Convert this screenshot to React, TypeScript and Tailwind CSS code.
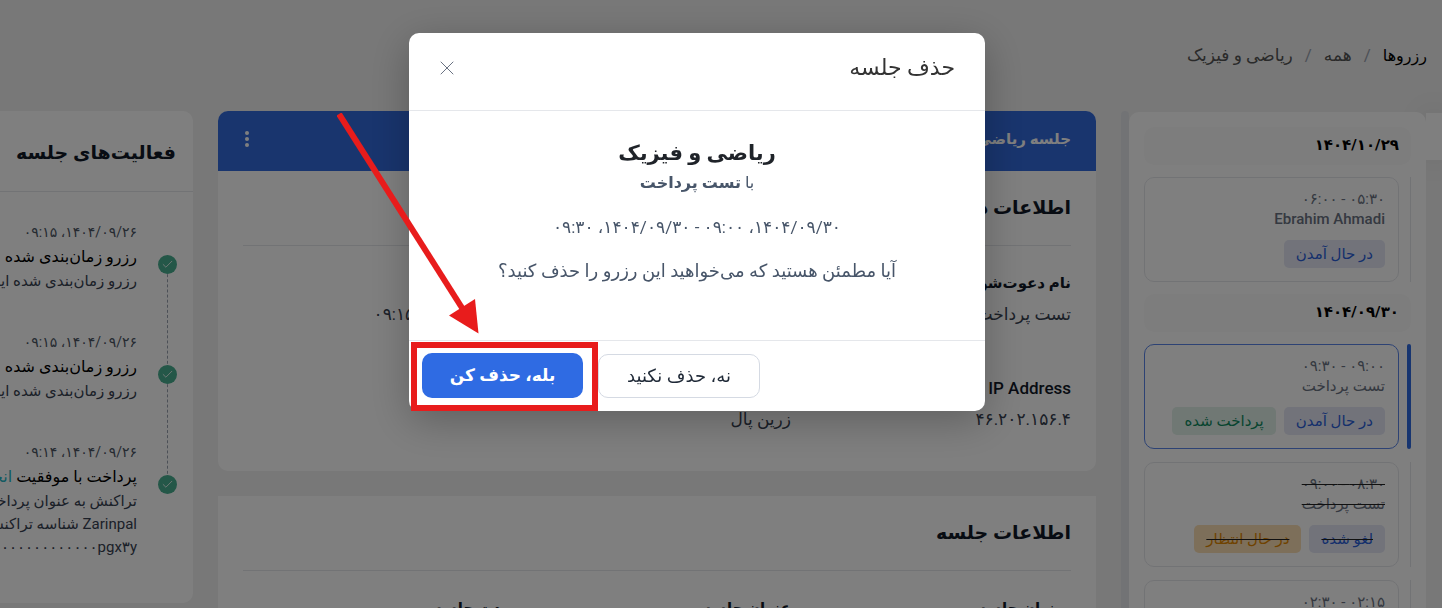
import { Check, X } from 'lucide-react';
import { clsx } from 'clsx';

type Badge = { text: string; tone: 'blue' | 'green' | 'orange' };
type Session = { time: string; name?: string; badges?: Badge[]; active?: boolean; canceled?: boolean };

const groups: { date: string; sessions: Session[] }[] = [
  {
    date: '۱۴۰۴/۱۰/۲۹',
    sessions: [{ time: '۰۵:۳۰ - ۰۶:۰۰', name: 'Ebrahim Ahmadi', badges: [{ text: 'در حال آمدن', tone: 'blue' }] }],
  },
  {
    date: '۱۴۰۴/۰۹/۳۰',
    sessions: [
      {
        time: '۰۹:۰۰ - ۰۹:۳۰',
        name: 'تست پرداخت',
        active: true,
        badges: [{ text: 'در حال آمدن', tone: 'blue' }, { text: 'پرداخت شده', tone: 'green' }],
      },
      {
        time: '۰۸:۳۰ - ۰۹:۰۰',
        name: 'تست پرداخت',
        canceled: true,
        badges: [{ text: 'لغو شده', tone: 'blue' }, { text: 'در حال انتظار', tone: 'orange' }],
      },
      { time: '۰۲:۱۵ - ۰۲:۳۰' },
    ],
  },
];

const activities = [
  { date: '۱۴۰۴/۰۹/۲۶، ۰۹:۱۵', title: 'رزرو زمان‌بندی شده', lines: ['رزرو زمان‌بندی شده این'] },
  { date: '۱۴۰۴/۰۹/۲۶، ۰۹:۱۵', title: 'رزرو زمان‌بندی شده', lines: ['رزرو زمان‌بندی شده این'] },
  {
    date: '۱۴۰۴/۰۹/۲۶، ۰۹:۱۴',
    title: 'پرداخت با موفقیت',
    link: 'انجام شد',
    lines: ['تراکنش به عنوان پرداخت', 'Zarinpal شناسه تراکنش', '۰۰۰۰۰۰۰۰۰۰۰۰۰۰pgx۳y'],
  },
];

const badgeTone = {
  blue: 'bg-[#e4e7f5] text-[#2b5fd9]',
  green: 'bg-[#e0f0e9] text-[#0f8a5f]',
  orange: 'bg-[#fbdfb5] text-[#e08600]',
};

const SessionCard = ({ time, name, badges = [], active, canceled }: Session) => (
  <div className="flex justify-between">
    <div className={clsx('shrink-0', active ? 'w-1 rounded-xs bg-[#2f6ae0]' : 'w-px bg-gray-200')} />
    <a
      href="#session"
      className={clsx(
        'block h-[105px] w-[255px] rounded-[10px] border px-[13px] pt-[11px] text-[15px] leading-5',
        active ? 'border-[#5a85e8]' : 'border-gray-200',
        canceled && 'line-through decoration-[#222]',
      )}
    >
      <div className="text-gray-500">{time}</div>
      <div className="font-medium text-gray-500">{name}</div>
      <div className="mt-[11px] flex gap-2">
        {badges.map((b) => (
          <span key={b.text} className={clsx('rounded-[5px] px-3 leading-7 whitespace-nowrap', badgeTone[b.tone])}>
            {b.text}
          </span>
        ))}
      </div>
    </a>
  </div>
);

const Sidebar = () => (
  <aside className="mt-px h-[520px] w-[297px] shrink-0 overflow-hidden rounded-t-[10px] bg-white p-[15px]">
    {groups.map((group) => (
      <section key={group.date} className="mb-3">
        <h4 className="mb-3 rounded-[10px] bg-[#fbfbfb] px-3 pb-[2px] text-[15px] leading-9 font-bold text-black">
          {group.date}
        </h4>
        <div className="flex flex-col gap-[13px]">
          {group.sessions.map((s) => (
            <SessionCard key={s.time} {...s} />
          ))}
        </div>
      </section>
    ))}
  </aside>
);

const Field = ({ label, value, latin }: { label?: string; value?: string; latin?: boolean }) => (
  <div>
    <dt className={clsx('h-7 leading-7 text-[#111827]', latin ? 'text-[17px] font-medium' : 'text-[15px] font-semibold')}>
      {label}
    </dt>
    {value && <dd className="mt-[3px] text-[17px] leading-7 text-[#374151]">{value}</dd>}
  </div>
);

const Details = () => (
  <main className="flex min-w-0 flex-1 flex-col gap-[25px]">
    <section className="h-[360px] overflow-hidden rounded-[10px] bg-white">
      <header className="flex h-[60px] items-center justify-between bg-[#326adc] px-[25px] pb-1 text-[15px] font-bold text-white">
        <span>جلسه ریاضی</span>
        <button aria-label="گزینه‌ها" className="flex w-2 flex-col items-center gap-[2px]">
          <i className="size-1 rounded-full bg-white" />
          <i className="size-1 rounded-full bg-white" />
          <i className="size-1 rounded-full bg-white" />
        </button>
      </header>
      <div className="px-[25px]">
        <h2 className="border-b border-gray-200 text-[19px] leading-[74px] font-bold text-[#111827]">اطلاعات دعوت</h2>
        <dl className="mt-[23px] grid grid-cols-3 gap-x-3 gap-y-[46px]">
          <Field label="نام دعوت‌شونده" value="تست پرداخت" />
          <Field />
          <Field value="۱۴۰۴/۰۹/۲۶، ۰۹:۱۵" />
          <Field label="IP Address" value="۴۶.۲۰۲.۱۵۶.۴" latin />
          <Field value="زرین پال" />
        </dl>
      </div>
    </section>
    <section className="bg-white px-[25px]">
      <h2 className="border-b border-gray-200 text-[19px] leading-[74px] font-bold text-[#111827]">اطلاعات جلسه</h2>
      <dl className="mt-[23px] grid grid-cols-3 gap-x-3">
        <Field label="میزبان جلسه" />
        <Field label="عنوان جلسه" />
        <Field label="مدت جلسه" />
      </dl>
    </section>
  </main>
);

const Activities = () => (
  <aside className="h-[492px] w-[193px] shrink-0 overflow-hidden rounded-tr-[10px] rounded-br-[10px] bg-white whitespace-nowrap">
    <h2 className="border-b border-gray-200 px-[17px] pt-1 text-[19px] leading-[76px] font-bold text-[#111827]">فعالیت‌های جلسه</h2>
    <ol className="pt-7">
      {activities.map((a, i) => (
        <li key={i} className="relative h-[110px] pr-14">
          {i < activities.length - 1 && (
            <div className="absolute top-11 right-[25px] h-[110px] border-r border-dashed border-gray-400" />
          )}
          <span className="absolute top-[35px] right-4 flex size-[19px] items-center justify-center rounded-full bg-[#48ae90] text-white">
            <Check size={13} strokeWidth={1.5} />
          </span>
          <div className="text-sm leading-6 text-[#4b5563]">{a.date}</div>
          <div className="text-base leading-[26px] font-medium text-black">
            {a.title} {a.link && <a href="#payment" className="text-[#1db5c4]">{a.link}</a>}
          </div>
          {a.lines.map((line) => (
            <div key={line} className="text-[15px] leading-[23px] text-[#374151]">{line}</div>
          ))}
        </li>
      ))}
    </ol>
  </aside>
);

const DeleteDialog = () => (
  <div className="fixed inset-0 flex items-start justify-center bg-black/50 pt-[33px] pr-12">
    <div role="dialog" aria-labelledby="dialog-title" className="relative w-full max-w-xl rounded-[10px] bg-white shadow-[0_10px_40px_rgba(0,0,0,0.25)]">
      <header className="flex items-center justify-between border-b border-gray-200 px-[30px] pb-2">
        <h1 id="dialog-title" className="text-[22px] leading-[69px] text-[#333]">حذف جلسه</h1>
        <button aria-label="بستن" className="-ml-1 text-gray-500">
          <X size={24} strokeWidth={1} />
        </button>
      </header>
      <div className="h-[229px] pt-[26px] text-center text-[17px] leading-6 text-[#475569]">
        <h3 className="text-[21px] leading-8 font-semibold text-[#1f2329]">ریاضی و فیزیک</h3>
        <p className="mt-[2px] text-base">
          با <b>تست پرداخت</b>
        </p>
        <p className="mt-5">۱۴۰۴/۰۹/۳۰، ۰۹:۰۰ - ۱۴۰۴/۰۹/۳۰، ۰۹:۳۰</p>
        <p className="mt-5 text-lg leading-6">آیا مطمئن هستید که می‌خواهید این رزرو را حذف کنید؟</p>
      </div>
      <footer className="flex items-center justify-end gap-[15px] border-t border-gray-200 pt-3 pb-[13px] pl-[13px]">
        <button className="h-[44px] w-[162px] rounded-[10px] border border-[#d5dae3] text-lg text-[#1f2937]">نه، حذف نکنید</button>
        <div className="relative">
          <button className="block h-[45px] w-[161px] rounded-[10px] bg-[#2f6be3] text-[17px] font-bold text-white">بله، حذف کن</button>
          <div className="pointer-events-none absolute -top-[11px] -right-[15px] -bottom-[13px] -left-[11px] border-6 border-[#e81c1c]" />
        </div>
      </footer>
      <svg className="pointer-events-none absolute top-20 -left-[72px]" width="144" height="224" viewBox="0 0 144 224" fill="#e81c1c">
        <path d="M2 1L127 198" stroke="#e81c1c" strokeWidth="6" />
        <path d="M141.500 220.500L112 202.500L138 186Z" />
      </svg>
    </div>
  </div>
);

const App = () => (
  <div dir="rtl" className="h-screen overflow-hidden bg-[#f0f0f0] font-[Roboto,'DejaVu_Sans',sans-serif]">
    <nav className="flex h-[111px] items-center gap-3 px-[15px] text-[17px] text-[#555]">
      <a href="#bookings" className="text-base font-medium text-black">رزروها</a>
      <span className="text-gray-400">/</span>
      <a href="#all">همه</a>
      <span className="text-gray-400">/</span>
      <span>ریاضی و فیزیک</span>
    </nav>
    <div className="flex items-start">
      <div className="mt-[2px] h-[47px] w-4 shrink-0 bg-white shadow-[0_0_30px_rgba(0,0,0,0.12)]" />
      <Sidebar />
      <div className="h-[520px] w-2 shrink-0 rounded-t bg-[#e5e7eb]" />
      <div className="flex min-w-0 flex-1 items-start gap-[25px] pr-[25px]">
        <Details />
        <Activities />
      </div>
    </div>
    <DeleteDialog />
  </div>
);

export default App;
